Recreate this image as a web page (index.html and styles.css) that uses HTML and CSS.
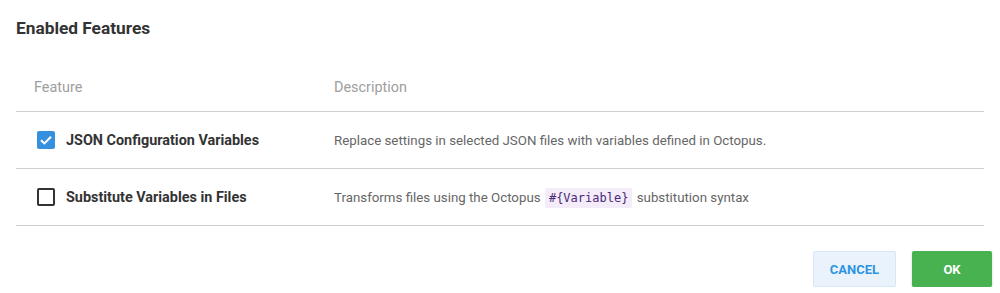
FILE: index.html
```html
<!DOCTYPE html>
<html>
<head>
<meta charset="utf-8">
<link rel="stylesheet" href="styles.css">
</head>
<body>
<div class="dialog">
  <h2 class="title">Enabled Features</h2>
  <div class="table">
    <div class="row head">
      <div class="col-feature">Feature</div>
      <div class="col-head">Description</div>
    </div>
    <div class="row">
      <div class="col-feature">
        <span class="checkbox checked">
          <svg viewBox="0 0 18 18" width="18" height="18"><path d="M4 9.2 L7.4 12.4 L14 5.8" fill="none" stroke="#fff" stroke-width="2"/></svg>
        </span>
        <span class="name">JSON Configuration Variables</span>
      </div>
      <div class="col-desc">Replace settings in selected JSON files with variables defined in Octopus.</div>
    </div>
    <div class="row">
      <div class="col-feature">
        <span class="checkbox"></span>
        <span class="name">Substitute Variables in Files</span>
      </div>
      <div class="col-desc">Transforms files using the Octopus <code class="code">#{Variable}</code> substitution syntax</div>
    </div>
  </div>
  <div class="actions">
    <button class="btn cancel">CANCEL</button>
    <button class="btn ok">OK</button>
  </div>
</div>
</body>
</html>
```

FILE: styles.css
```css
html, body {
  margin: 0;
  padding: 0;
  background: #fff;
}
body {
  font-family: Roboto, "Liberation Sans", sans-serif;
  color: #333;
}
.dialog {
  padding: 16px 16px 0 16px;
}
.title {
  margin: 0;
  font-size: 17.3px;
  line-height: 24px;
  font-weight: 700;
  color: #333;
}
.table {
  margin-top: 23px;
}
.row {
  display: grid;
  grid-template-columns: 318px 1fr;
  align-items: center;
  height: 57px;
  border-bottom: 1px solid #cfcfcf;
  box-sizing: border-box;
  font-size: 13.3px;
}
.row.head {
  height: 49px;
  color: #9e9e9e;
  font-size: 14.4px;
}
.col-feature {
  padding-left: 18px;
  display: flex;
  align-items: center;
}
.row:not(.head) .col-feature {
  padding-left: 21px;
}
.checkbox {
  width: 18px;
  height: 18px;
  box-sizing: border-box;
  border: 2px solid #333;
  border-radius: 2px;
  margin-right: 11px;
  display: flex;
  align-items: center;
  justify-content: center;
  flex: none;
}
.checkbox.checked {
  background: #3591e0;
  border: none;
}
.checkbox svg {
  display: block;
}
.name {
  font-weight: 700;
  font-size: 14.4px;
  color: #333;
}
.col-desc {
  color: #666;
}
.code {
  font-family: "DejaVu Sans Mono", "Liberation Mono", monospace;
  font-size: 12px;
  background: #f4ecf8;
  color: #4a2a7a;
  padding: 3px 4px;
  border-radius: 2px;
  margin: 0 1px;
}
.actions {
  display: flex;
  justify-content: flex-end;
  gap: 16px;
  padding-top: 25px;
  margin-right: -8px;
}
.btn {
  height: 36px;
  font-family: Roboto, "Liberation Sans", sans-serif;
  font-size: 13px;
  font-weight: 700;
  border-radius: 2px;
  cursor: pointer;
}
.cancel {
  width: 83px;
  background: #eaf3fc;
  border: 1px solid #d6e7f7;
  color: #2f93e0;
}
.ok {
  width: 80px;
  background: #48b250;
  border: none;
  color: #fff;
  box-shadow: 0 1px 2px rgba(0,0,0,0.25);
}
```
